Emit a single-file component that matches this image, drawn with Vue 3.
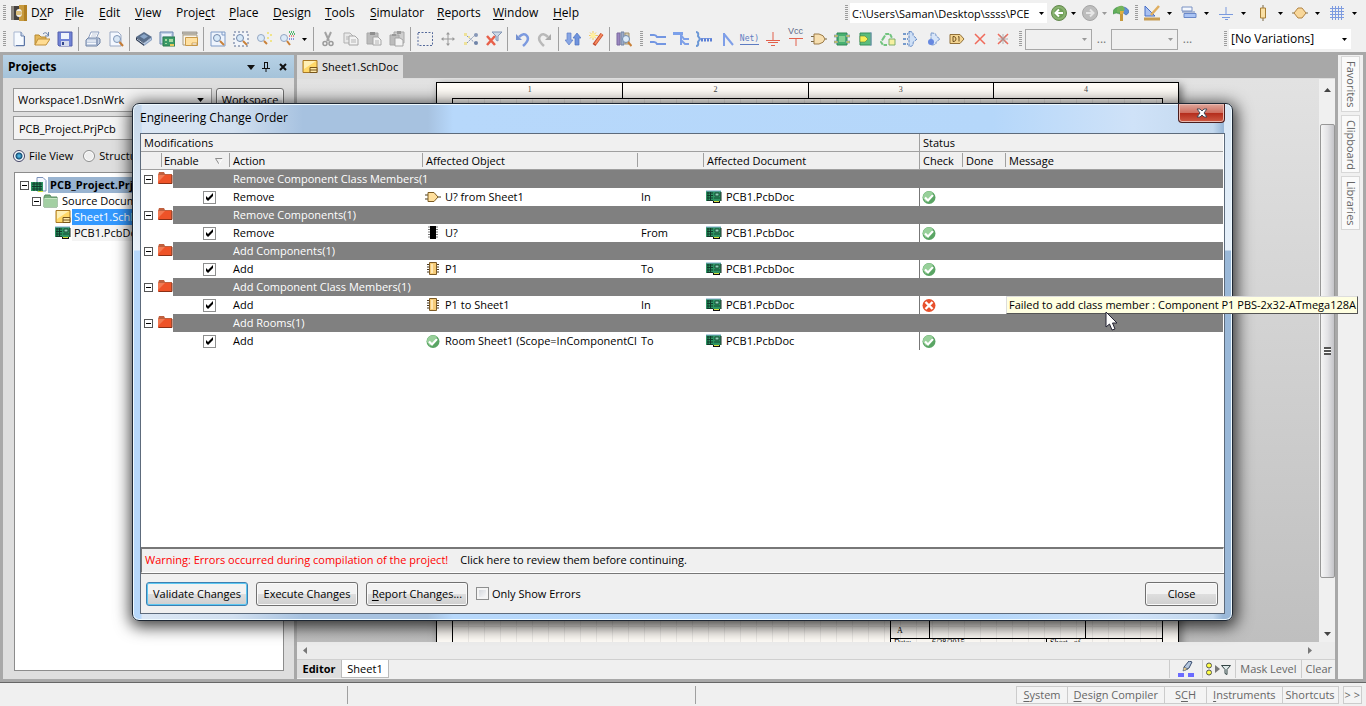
<script setup>
import { ref } from 'vue'

const art = {
  dxp: '<path d="M0 1h8v3q-3 0-3 4t3 4v3H0z" fill="#45413e"/><path d="M0 1h3v14H0z" fill="#8b867f"/><path d="M8 0h8v16H8v-4q3 0 3-4T8 4z" fill="#c79a3e"/><path d="M13 0h3v16h-3z" fill="#b07f22"/><path d="M5 6h4a2 2 0 0 1 0 4H5z" fill="#dcbf7c"/>',
  file: '<path d="M3 1h7l3 4v10H3z" fill="#f6faff" stroke="#a9b8d2"/><path d="M10 1v4h3" fill="#c7d6ec" stroke="#6f84ac"/><path d="M13.500 5v9.500H5" fill="none" stroke="#5c76a6"/>',
  open: '<path d="M1 14V4h4l2 2h5v2" fill="#e3b75a" stroke="#b88a30"/><path d="M4 8h12l-4 6H1z" fill="#ffdc92" stroke="#c0903a"/><path d="M9 3q3-3 5 1M14.500 1v4H11" fill="none" stroke="#6a82a8"/>',
  save: '<path d="M1 1h14v14H2l-1-1z" fill="#7183d6" stroke="#5560ac"/><path d="M4 2h8v6H4z" fill="#f0f4fb"/><path d="M4 10h8v5H4z" fill="#d5dbec"/><path d="M5 11h2v3H5z" fill="#33468e"/>',
  print: '<path d="M6 1h8l-3 7H3z" fill="#fff" stroke="#8d9fc0"/><path d="M1 9l2-2h11l1 1v4l-3 3H1z" fill="#c3cfe2" stroke="#6f83a6"/><path d="M2 10h9M2 12.500h9" stroke="#f6f9fe"/><path d="M12 8v6" stroke="#62779c"/><path d="M7 3h5M6 5h5" stroke="#a5b3cc" stroke-width=".7"/>',
  preview: '<path d="M2 1h8l3 3v11H2z" fill="#f4f8ff" stroke="#9aa9c4"/><circle cx="9" cy="8" r="3.500" fill="#d8e6f5" stroke="#8197b8"/><path d="M11.500 11l3.500 4" stroke="#c47c36" stroke-width="2"/>',
  cube: '<path d="M0 6l8-5 8 5-8 6z" fill="#5a6f8c"/><path d="M0 6l8 6v3L0 9z" fill="#2d3b52"/><path d="M16 6l-8 6v3l8-6z" fill="#8ca3c4"/><path d="M4 5.500l4-2.500 4 2.500L8 8z" fill="#8aa6c8"/><path d="M1 8l7 5 7-5" fill="none" stroke="#c2d2e6"/>',
  pcb: '<path d="M1 1h13v12H1z" fill="#c3d3e8" stroke="#6a86b0"/><path d="M3 3h9v2H3z" fill="#eef4fb"/><path d="M4 6h12v9H4z" fill="#3a9a68" stroke="#2a7a4c"/><path d="M6 8h2v2H6zM10 8h4v3h-4zM6 12h2v1H6z" fill="#a7dba2"/><path d="M11 13h4v2h-4z" fill="#e6c85a"/>',
  sheets: '<path d="M0 1h15v2H0z" fill="#c9c5bd" stroke="#8e897f" stroke-width=".8"/><path d="M1 4h14v10H1z" fill="#f8f4ea" stroke="#a79c84"/><path d="M3.500 6.500h12v8h-12z" fill="#ffe0a0" stroke="#c99a4a"/><path d="M10 12h5v2h-5z" fill="#fff" stroke="#bd8a35" stroke-width=".7"/>',
  zoomDoc: '<path d="M1 1h14v14H1z" fill="#eef4fd" stroke="#7f9bc7"/><path d="M12 1v3h3" fill="none" stroke="#7f9bc7"/><circle cx="7" cy="7" r="3.500" fill="#d6e8f8" stroke="#7288aa"/><path d="M10 10l4 4" stroke="#c98038" stroke-width="2"/>',
  zoomArea: '<path d="M1 1h14v14H1z" fill="#f2f5fa" stroke="#5a6d92" stroke-dasharray="2 2"/><circle cx="7" cy="7" r="3.500" fill="#d6e8f8" stroke="#7288aa"/><path d="M10 10l4 4" stroke="#c98038" stroke-width="2"/>',
  zoomSel: '<circle cx="5" cy="7" r="3.500" fill="#dbeaf8" stroke="#93a6c2"/><path d="M8 10l3 3" stroke="#c98038" stroke-width="2"/><path d="M11 1h2v2h-2zM14 3h2v2h-2zM11 6h2v2h-2zM14 9h2v2h-2z" fill="#f0e48a"/>',
  zoomFilt: '<circle cx="5" cy="7" r="3.500" fill="#dbeaf8" stroke="#93a6c2"/><path d="M8 10l3 4" stroke="#c98038" stroke-width="2"/><path d="M10 1h6" stroke="#53b870" stroke-width="2" stroke-dasharray="1 1"/><path d="M11 3h5" stroke="#53b870" stroke-width="2" stroke-dasharray="1 1"/><path d="M10 5h6" stroke="#e58787" stroke-width="2" stroke-dasharray="1 1"/><path d="M10 8h6" stroke="#8796e2" stroke-width="2" stroke-dasharray="1 1"/>',
  cut: '<path d="M5 1l4 9M11 1L7 10" stroke="#a3a3a3" stroke-width="2"/><circle cx="5" cy="12.500" r="2" fill="none" stroke="#9b9b9b" stroke-width="1.500"/><circle cx="11" cy="12.500" r="2" fill="none" stroke="#9b9b9b" stroke-width="1.500"/>',
  copy: '<path d="M1 2h6l3 3v7H1z" fill="#e9e9e9" stroke="#b1b1b1"/><path d="M6 5h6l3 3v6H6z" fill="#f2f2f2" stroke="#a5a5a5"/><path d="M8 9h5M8 11h5M3 6h3M3 8h3" stroke="#b5b5b5"/>',
  paste: '<path d="M1 2h11v11H1z" fill="#bcbcbc" stroke="#a8a8a8"/><path d="M4 1h5v3H4z" fill="#8f8f8f"/><path d="M7 6h5l3 3v5H7z" fill="#f3f3f3" stroke="#a5a5a5"/><path d="M9 10h4M9 12h4" stroke="#b5b5b5"/>',
  pasteAll: '<path d="M5 1h10v11H5z" fill="#cfcfcf" stroke="#a8a8a8"/><path d="M1 4h9v10H1z" fill="#bcbcbc" stroke="#a8a8a8"/><path d="M8 0h4v3H8zM3 3h4v2H3z" fill="#999"/><path d="M6 7h5l3 2v6H6z" fill="#f3f3f3" stroke="#a5a5a5"/>',
  select: '<path d="M1 1.500h14.500v13H1z" fill="none" stroke="#54699a" stroke-dasharray="2 1.500"/>',
  move: '<path d="M8 2v12M2 8h12" stroke="#999"/><path d="M8 1l2 2.500H6zM8 15l2-2.500H6zM1 8l2.500-2v4zM15 8l-2.500-2v4z" fill="#999"/>',
  desel: '<path d="M4 12l8-8M4 5l8 7" stroke="#8796b2" stroke-dasharray="2 1"/><path d="M1 2h3v3H1zM1 11h3v3H1zM5 5h2v2H5z" fill="#eee29a"/><circle cx="13" cy="4" r="2" fill="#8798b8"/><circle cx="13" cy="12" r="2" fill="#6f84a8"/>',
  clear: '<path d="M1 5l8 9M9 5l-8 9" stroke="#e8604a" stroke-width="2.500"/><path d="M6 1h10l-4 4v5l-2-1V5z" fill="#cbd7e6" stroke="#8296b4"/>',
  undo: '<path d="M2 3v6h6z" fill="#7390d0"/><path d="M5 6q5-5 8-1t-4 10" fill="none" stroke="#7c9adf" stroke-width="2.500"/>',
  redo: '<path d="M14 3v6H8z" fill="#aaa"/><path d="M11 6Q6 1 3 5t4 10" fill="none" stroke="#b9b9b9" stroke-width="2.500"/>',
  updown: '<path d="M2 2h4v7h2l-4 5-4-5h2z" fill="#88a6e4" stroke="#5f80c8" stroke-width=".7"/><path d="M10 14h4V7h2l-4-5-4 5h2z" fill="#6f93dd" stroke="#4f72bf" stroke-width=".7"/>',
  wand: '<path d="M14 3L6 14" stroke="#c0452a" stroke-width="3.500"/><path d="M14 3L7 13" stroke="#f58a5e" stroke-width="2"/><path d="M5 0v9M1 4.500h9M2 1.500l6 6M8 1.500l-6 6" stroke="#f4ca5a"/><circle cx="5" cy="4.500" r="2.500" fill="#fff0a0"/>',
  books: '<path d="M1 2h3v12H1z" fill="#9a88c0" stroke="#7a689f"/><path d="M5 1h3v13H5z" fill="#9dadc8" stroke="#7284a3"/><path d="M9 2h4v11H9z" fill="#d6ccb4" stroke="#a0936f"/><circle cx="10" cy="8" r="3.500" fill="#dcebf9" stroke="#718bad"/><path d="M12 11l3.500 4" stroke="#c98038" stroke-width="2"/>',
  wire: '<path d="M0 4h4q2 0 3 2h9M0 11h4q2 0 3 2h9" fill="none" stroke="#7396e2" stroke-width="2"/>',
  bus: '<path d="M0 2.500h10" stroke="#7ba0ea" stroke-width="3"/><path d="M8 2v12M8 4l3 4h5M8 9l4 4h4" fill="none" stroke="#7ea0e8" stroke-width="2"/>',
  harness: '<path d="M0 1q3 0 2 4l2 3-2 3q1 4-2 4" fill="none" stroke="#6c98d6" stroke-width="2"/><path d="M4 7.500h12" stroke="#7f9ce0"/><path d="M5 9h11" stroke="#5c80d6" stroke-width="3" stroke-dasharray="2 1"/>',
  entry: '<path d="M5 2v13M5 3l9 11" stroke="#7f9fe8" stroke-width="2" fill="none"/>',
  gnd: '<path d="M8 1v8M1 9.500h14M3 11.500h10M6 14.500h4" stroke="#e2604c"/>',
  vcc: '<path d="M1 7.500h14M8 7v8" stroke="#e2604c"/>',
  gate: '<path d="M0 5.500h4M0 10.500h4M12 8h4" stroke="#776644"/><path d="M3 3h5q5 1 6 5-1 4-6 5H3z" fill="#f7dfb0" stroke="#9b7b48"/>',
  sheetSym: '<path d="M3 2h10v12H3z" fill="#48b070" stroke="#2d8753"/><path d="M5 5h6v6H5z" fill="#86cf93"/><path d="M0 4h4v2H0zM0 10h4v2H0zM12 4h4v2h-4zM12 10h4v2h-4z" fill="#dfd34d" stroke="#6787ba" stroke-width=".6"/>',
  sheetEnt: '<path d="M3 2h11v12H3z" fill="#5bbd7d" stroke="#35905a"/><path d="M3 5h5l3 3-3 3H3z" fill="#f6ef55" stroke="#567f3a" stroke-width=".6"/><path d="M14 1v14" stroke="#7f98c4"/>',
  recycle: '<path d="M3 8l3-5h4l2 4M4 6l-3 5 2 3h4" fill="none" stroke="#72c47f" stroke-width="2" stroke-dasharray="4 1"/><path d="M9 8h6v6H9z" fill="#f5f0a0" stroke="#7fae6b"/>',
  harnCon: '<path d="M0 3h5M0 8h5M0 13h5" stroke="#4f7fc0" stroke-width="1.500" stroke-dasharray="3 1"/><path d="M6 .5q5 0 4 4l4 3.500-4 3.500q1 4-4 4z" fill="#cfe0f6" stroke="#5b83c2" stroke-dasharray="3 1"/>',
  harnEnt: '<path d="M5 2q6 0 5 3l4 3-4 3q1 3-5 3z" fill="#d7e5f8" stroke="#6f92c8" stroke-dasharray="3 1"/><circle cx="5" cy="11" r="3" fill="#6688e0"/>',
  port: '<path d="M1 3.500h10l4 4.500-4 4.500H1z" fill="#f4d591" stroke="#92713a"/><path d="M4 5.500v5h1q2-.5 2-2.500t-2-2.500zM9 6l1-.5v5" fill="none" stroke="#6d4f20"/>',
  noErc: '<path d="M3 3l10 10M13 3L3 13" stroke="#f06a5a" stroke-width="1.500"/>',
  noErc2: '<path d="M3 3l10 10M13 3L3 13" stroke="#f06a5a" stroke-width="1.500"/><path d="M3 8h10M8 3v10M5 4l6 8M11 4l-6 8" stroke="#999" stroke-width=".7"/>',
  back: '<circle cx="8" cy="8" r="7.500" fill="#86b06a" stroke="#63884f"/><circle cx="8" cy="8" r="5.500" fill="#6f9f58" stroke="#8fb878"/><path d="M12 8H5M8 4.500L4.500 8 8 11.500" fill="none" stroke="#fff" stroke-width="2"/>',
  fwd: '<circle cx="8" cy="8" r="7.500" fill="#bdbdbd" stroke="#a5a5a5"/><path d="M4 8h7M8 4.500L11.500 8 8 11.500" fill="none" stroke="#e6e6e6" stroke-width="2"/>',
  signs: '<path d="M7 7h3v9H7z" fill="#c79a3e"/><path d="M0 7q1-5 7-5v7q-4-2-7 0z" fill="#5fae5a" stroke="#3f8848" stroke-width=".6"/><path d="M9 2q6 0 7 5-1 2-3 3L9 7z" fill="#5f90d6" stroke="#3760a0" stroke-width=".6"/><path d="M4 4q1-4 6-3l2 3-3 4-5-1z" fill="#74b45c"/><path d="M7 6h4l-1 3H7z" fill="#e0b040"/>',
  draw: '<path d="M1 1v10h10z" fill="#a9c1f2" stroke="#4870c8"/><path d="M15 1L7 10" stroke="#dfae60" stroke-width="2.500"/><path d="M0 12.500h16v3H0z" fill="#c79d54"/>',
  align: '<path d="M1 2h10v4H1z" fill="#f5f8fd" stroke="#7b92c4"/><path d="M3 8.500h12v4H3z" fill="#a9c3f4" stroke="#6a88c8"/><path d="M1 7h13" stroke="#6a84bc"/>',
  gndBlue: '<path d="M8 2v7M1 9.500h14M4 12.500h8M7 14.500h3" stroke="#7a9ade"/>',
  resistor: '<path d="M8 0v16" stroke="#776644"/><path d="M5.500 3h5v10h-5z" fill="#f9dfa4" stroke="#a87f36"/>',
  diamond: '<path d="M0 8h16" stroke="#83744c"/><path d="M6 3h4l4 5-4 5H6L2 8z" fill="#f8d79a" stroke="#b28443"/>',
  grid: '<path d="M3.500 1v14M6.500 1v14M9.500 1v14M12.500 1v14M1 3.500h14M1 6.500h14M1 9.500h14M1 12.500h14" stroke="#7d9be0"/>',
  sch: '<path d="M1 1.500h14v12H1z" fill="#ffd868" stroke="#a87826"/><path d="M2 2h12L2 10z" fill="#fff0b5"/><path d="M8 8.500h7v5H8z" fill="#ffe9a8" stroke="#77551a"/><path d="M8 11h7" stroke="#77551a"/>',
  folderG: '<path d="M1 4l1-2h5l1 2h6v10H1z" fill="#79ad7e" stroke="#5a8c61"/><path d="M1 5h13v9H1z" fill="#a3cfa3"/><path d="M2 5.500h12" stroke="#c7e7c4"/>',
  folderR: '<path d="M0 4l1-3h5l1 2h7v10H0z" fill="#c0603e"/><path d="M0 4h13v8H0z" fill="#ee5328"/><path d="M0 4h7l-7 7z" fill="#f27a52"/><path d="M1 12.500h13V4" fill="none" stroke="#8c2f15"/>',
  board: '<path d="M0 2h15v10H0z" fill="#2c9462"/><path d="M0 2h15" stroke="#7aa6c8"/><path d="M1 4h6M1 6.500h6M1 9h6M1 11.500h6M2 3v9M4.500 3v9" stroke="#10392a"/><path d="M9 4h4v3H9z" fill="#8fd0b8" stroke="#174c37"/><path d="M8 9h6" stroke="#154a33"/><path d="M15 3v9" stroke="#1c2b25"/><path d="M7 13h7" stroke="#111" stroke-width="2"/><path d="M8 12.500h5" stroke="#d6e03c"/>',
  project: '<path d="M6 .5h6l3 3V14H6z" fill="#f4f8ff" stroke="#7c92ba"/><path d="M0 5h12v9H0z" fill="#2c9462"/><path d="M1 7h10M1 9.500h10M1 12h10M3 5v9M6 5v9M9 5v9" stroke="#10392a"/><path d="M7 14.500h5" stroke="#d6e03c"/>',
  and: '<path d="M0 6h4M0 10h4M12 8h4" stroke="#4b3c1e"/><path d="M3 3.500h6l4 4.500-4 4.500H3z" fill="#ffdf9c" stroke="#7d5c22"/>',
  chipB: '<path d="M3 2h3M3 4.500h3M3 7h3M3 9.500h3M3 12h3M10 2h3M10 4.500h3M10 7h3M10 9.500h3M10 12h3" stroke="#777"/><path d="M5 1h6v13H5z" fill="#000"/>',
  chipY: '<path d="M2 3.500h3M2 6h3M2 8.500h3M2 11h3M11 3.500h3M11 6h3M11 8.500h3M11 11h3" stroke="#493820"/><path d="M4.500 1.500h7v12h-7z" fill="#f6cc78" stroke="#7d5b26"/><path d="M6 3h2v9H6z" fill="#ffe7b2"/>',
  ok: '<circle cx="8" cy="8.500" r="6.500" fill="#5aa564"/><path d="M2 9a6 6 0 0 1 10-5L5 13z" fill="#98d09a"/><path d="M4 8.500l3 3L12 6" fill="none" stroke="#fff" stroke-width="2.200"/>',
  bad: '<circle cx="8" cy="8.500" r="6.500" fill="#e8502c"/><path d="M4.500 5l7 7M11.500 5l-7 7" stroke="#fff" stroke-width="2.400"/>',
  pen: '<path d="M6 6l5-6 3 1-3 6-4 2z" fill="#b4c6dd" stroke="#374b6e"/><path d="M6 6l4 2-5 2z" fill="#f3d58b" stroke="#374b6e" stroke-width=".6"/><path d="M0 12h6v4H0zM10 12h6v4h-6z" fill="#6b6bff"/>',
}

const menus = [['D', 'X', 'P'], ['', 'F', 'ile'], ['', 'E', 'dit'], ['', 'V', 'iew'], ['Proje', 'c', 't'], ['', 'P', 'lace'], ['', 'D', 'esign'], ['', 'T', 'ools'], ['', 'S', 'imulator'], ['', 'R', 'eports'], ['', 'W', 'indow'], ['', 'H', 'elp']]
const quick = ['draw', 'align', 'gndBlue', 'resistor', 'diamond', 'grid']
const groups = [
  ['file', 'open', 'save'], ['print', 'preview'], ['cube', 'pcb', 'sheets'],
  ['zoomDoc', 'zoomArea', 'zoomSel', 'zoomFilt', 'caret'],
  ['cut', 'copy', 'paste', 'pasteAll'], ['select', 'move', 'desel', 'clear'],
  ['undo', 'redo'], ['updown', 'wand'], ['books'],
]
const wiring = ['wire', 'bus', 'harness', 'entry', 'net', 'gnd', 'vcc', 'gate', 'sheetSym', 'sheetEnt', 'recycle', 'harnCon', 'harnEnt', 'port', 'noErc', 'noErc2']

const changes = ref([
  { title: 'Remove Component Class Members(1', on: true, action: 'Remove', icon: 'and', object: 'U? from Sheet1', dir: 'In', check: 'ok' },
  { title: 'Remove Components(1)', on: true, action: 'Remove', icon: 'chipB', object: 'U?', dir: 'From', check: 'ok' },
  { title: 'Add Components(1)', on: true, action: 'Add', icon: 'chipY', object: 'P1', dir: 'To', check: 'ok' },
  { title: 'Add Component Class Members(1)', on: true, action: 'Add', icon: 'chipY', object: 'P1 to Sheet1', dir: 'In', check: 'bad', tip: 'Failed to add class member : Component P1 PBS-2x32-ATmega128A' },
  { title: 'Add Rooms(1)', on: true, action: 'Add', icon: 'ok', object: 'Room Sheet1 (Scope=InComponentCl', dir: 'To', check: 'ok' },
])
const view = ref('file')
const onlyErrors = ref(false)
const path = ref('C:\\Users\\Saman\\Desktop\\ssss\\PCE')
const project = ref('PCB_Project.PrjPcb')
</script>

<template>
  <div class="app">
    <header class="bars">
      <div class="bar">
        <i class="grip first"></i>
        <svg class="ico logo" viewBox="0 0 16 16" v-html="art.dxp"></svg>
        <nav class="menu">
          <button v-for="m in menus" :key="m.join('')" type="button">{{ m[0] }}<u>{{ m[1] }}</u>{{ m[2] }}</button>
        </nav>
        <div class="right-tools">
          <i class="grip"></i>
          <div class="combo path"><input v-model="path" aria-label="Path"><svg class="caret" viewBox="0 0 5 3"><path d="M0 0h5L2.500 3z" /></svg></div>
          <button class="tool" type="button" aria-label="Back"><svg class="ico" viewBox="0 0 16 16" v-html="art.back"></svg></button>
          <svg class="caret slim" viewBox="0 0 5 3"><path d="M0 0h5L2.500 3z" /></svg>
          <button class="tool" type="button" aria-label="Forward"><svg class="ico" viewBox="0 0 16 16" v-html="art.fwd"></svg></button>
          <svg class="caret slim dim" viewBox="0 0 5 3"><path d="M0 0h5L2.500 3z" /></svg>
          <button class="tool" type="button" aria-label="Navigate"><svg class="ico" viewBox="0 0 16 16" v-html="art.signs"></svg></button>
          <i class="grip"></i>
          <template v-for="q in quick" :key="q">
            <button class="tool" type="button" :aria-label="q"><svg class="ico" viewBox="0 0 16 16" v-html="art[q]"></svg></button>
            <svg class="caret spaced" viewBox="0 0 5 3"><path d="M0 0h5L2.500 3z" /></svg>
          </template>
        </div>
      </div>
      <div class="bar">
        <i class="grip first"></i>
        <div v-for="(g, i) in groups" :key="i" class="group">
          <template v-for="t in g" :key="t">
            <svg v-if="t === 'caret'" class="caret wide" viewBox="0 0 5 3"><path d="M0 0h5L2.500 3z" /></svg>
            <button v-else class="tool" type="button" :aria-label="t"><svg class="ico" viewBox="0 0 16 16" v-html="art[t]"></svg></button>
          </template>
        </div>
        <i class="grip roomy"></i>
        <button v-for="w in wiring" :key="w" class="tool" type="button" :aria-label="w">
          <span v-if="w === 'net'" class="net">Net)</span>
          <template v-else>
            <span v-if="w === 'vcc'" class="vcc">Vcc</span>
            <svg class="ico" viewBox="0 0 16 16" v-html="art[w]"></svg>
          </template>
        </button>
        <i class="grip roomy"></i>
        <div class="combo off"><select aria-label="Filter" disabled></select><svg class="caret dim" viewBox="0 0 5 3"><path d="M0 0h5L2.500 3z" /></svg></div>
        <span class="dots">...</span>
        <div class="combo off"><select aria-label="Mask" disabled></select><svg class="caret dim" viewBox="0 0 5 3"><path d="M0 0h5L2.500 3z" /></svg></div>
        <span class="dots">...</span>
        <div class="right-tools variants">
          <i class="grip"></i>
          <div class="combo var"><select aria-label="Variations"><option>[No Variations]</option></select><svg class="caret" viewBox="0 0 5 3"><path d="M0 0h5L2.500 3z" /></svg></div>
        </div>
      </div>
    </header>

    <main class="work">
      <aside class="projects">
        <div class="panel-head">
          <h2>Projects</h2>
          <svg viewBox="0 0 40 10"><path d="M0 3h8L4 8z" fill="#111" /><path d="M17.500 0v6M20.500 0v6M17 .5h4M15 6.500h8M19 6v4" stroke="#111" fill="none" /><path d="M33 2l6 6M39 2l-6 6" stroke="#111" stroke-width="2" /></svg>
        </div>
        <div class="panel-body">
          <div class="prow">
            <div class="combo box"><select aria-label="Workspace file"><option>Workspace1.DsnWrk</option></select><svg class="caret" viewBox="0 0 5 3"><path d="M0 0h5L2.500 3z" /></svg></div>
            <button class="btn ws" type="button">Workspace</button>
          </div>
          <div class="prow"><input v-model="project" class="field" aria-label="Project file"></div>
          <div class="prow radios">
            <label><input v-model="view" type="radio" value="file">File View</label>
            <label><input v-model="view" type="radio" value="structure">Structure Editor</label>
          </div>
          <ul class="tree">
            <li class="lv0"><i class="minus"></i><svg class="ico" viewBox="0 0 16 16" v-html="art.project"></svg><span class="proj">PCB_Project.PrjPcb</span></li>
            <li class="lv1"><i class="minus"></i><svg class="ico" viewBox="0 0 16 16" v-html="art.folderG"></svg><span>Source Documents</span></li>
            <li class="lv2"><svg class="ico" viewBox="0 0 16 16" v-html="art.sch"></svg><span class="sel">Sheet1.SchDoc</span></li>
            <li class="lv2"><svg class="ico" viewBox="0 0 16 16" v-html="art.board"></svg><span class="hot">PCB1.PcbDoc</span></li>
          </ul>
        </div>
      </aside>

      <section class="editor">
        <div class="doc-tabs"><button type="button"><svg class="ico" viewBox="0 0 16 16" v-html="art.sch"></svg>Sheet1.SchDoc</button></div>
        <div class="stage">
          <div class="canvas">
            <div class="paper">
              <div class="zones"><span>1</span><span>2</span><span>3</span><span>4</span></div>
              <div class="inner">
                <div class="title-block">
                  <div class="tb-row top"><span>A</span><span></span><span></span></div>
                  <div class="tb-row"><span>Date:</span><span>6/28/2015</span><span>Sheet &nbsp; of</span></div>
                </div>
              </div>
            </div>
          </div>
          <div class="vbar">
            <svg viewBox="0 0 7 4"><path d="M0 4h7L3.500 0z" /></svg>
            <div class="thumb"><i></i></div>
            <svg viewBox="0 0 7 4"><path d="M0 0h7L3.500 4z" /></svg>
          </div>
        </div>
        <div class="hbar">
          <svg viewBox="0 0 4 7"><path d="M4 0v7L0 3.500z" /></svg>
          <svg viewBox="0 0 4 7"><path d="M0 0v7l4-3.500z" /></svg>
        </div>
        <div class="foot-tabs">
          <b>Editor</b><button class="on" type="button">Sheet1</button>
          <div class="masks">
            <button type="button" aria-label="Highlight"><svg class="ico" viewBox="0 0 16 16" v-html="art.pen"></svg></button>
            <button type="button" aria-label="Filter"><svg class="filt" viewBox="0 0 28 16"><circle cx="4" cy="4.500" r="2.500" fill="#ff4" stroke="#555" /><circle cx="4" cy="11.500" r="2.500" fill="#ff4" stroke="#555" /><path d="M10 4v8l5-4z" fill="#777" /><path d="M16.500 4.500h9l-3.500 4v5l-2-1v-4z" fill="#dfe9e9" stroke="#344" /></svg></button>
            <button type="button">Mask Level</button><button type="button">Clear</button>
          </div>
        </div>
      </section>

      <nav class="side-tabs"><button type="button">Favorites</button><button type="button">Clipboard</button><button type="button">Libraries</button></nav>
    </main>

    <footer class="status">
      <div></div><div></div>
      <div class="panels">
        <button type="button"><u>S</u>ystem</button><button type="button"><u>D</u>esign Compiler</button><button class="sch" type="button">S<u>C</u>H</button><button type="button"><u>I</u>nstruments</button><button class="tight" type="button">Shortcuts</button>
        <button class="more" type="button">&gt; &gt;</button>
      </div>
    </footer>

    <div class="dialog" role="dialog" aria-labelledby="eco-title">
      <div class="title">
        <h1 id="eco-title">Engineering Change Order</h1>
        <button class="x" type="button" aria-label="Close window"><svg viewBox="0 0 12 10"><path d="M1 1h3l2 2 2-2h3L8 5l3 4H8L6 7 4 9H1l3-4z" fill="#fff" stroke="#444a58" /></svg></button>
      </div>
      <div class="client">
        <div class="grid-area">
          <table>
            <colgroup><col class="c-tree"><col class="c-en"><col class="c-act"><col class="c-obj"><col class="c-dir"><col class="c-doc"><col class="c-chk"><col class="c-chk"><col></colgroup>
            <thead>
              <tr class="bands"><th colspan="6">Modifications</th><th colspan="3">Status</th></tr>
              <tr class="cols"><th></th><th class="enable">Enable<svg viewBox="0 0 8 7"><path d="M7.500.5h-7L4 6" fill="none" stroke="#8c8c8c" /><path d="M7.500.5L4 6" stroke="#fff" /></svg></th><th>Action</th><th>Affected Object</th><th></th><th>Affected Document</th><th class="full">Check</th><th>Done</th><th>Message</th></tr>
            </thead>
            <tbody v-for="c in changes" :key="c.title">
              <tr class="grp"><td colspan="2" class="node"><div><i class="minus"></i><svg class="ico" viewBox="0 0 16 16" v-html="art.folderR"></svg></div></td><td class="name">{{ c.title }}</td><td colspan="6"></td></tr>
              <tr>
                <td></td>
                <td class="en"><label><input v-model="c.on" type="checkbox" :aria-label="'Enable ' + c.object"><svg v-if="c.on" viewBox="0 0 13 13"><path d="M3 5v3l2 2 5-5V2L5 7z" /></svg></label></td>
                <td>{{ c.action }}</td>
                <td><div class="with-ico"><svg class="ico" viewBox="0 0 16 16" v-html="art[c.icon]"></svg>{{ c.object }}</div></td>
                <td>{{ c.dir }}</td>
                <td><div class="with-ico"><svg class="ico" viewBox="0 0 16 16" v-html="art.board"></svg>PCB1.PcbDoc</div></td>
                <td class="chk"><svg class="ico" viewBox="0 0 16 16" v-html="art[c.check]"></svg></td>
                <td></td>
                <td class="msg"><div v-if="c.tip" class="tip">{{ c.tip }}<svg class="cursor" viewBox="0 0 13 20"><path d="M1 1v15l3.500-3 2.500 6 3-1-2.500-6H12z" fill="#fff" stroke="#223" /></svg></div></td>
              </tr>
            </tbody>
          </table>
        </div>
        <div class="warn"><span>Warning: Errors occurred during compilation of the project!</span><a href="#">Click here to review them before continuing.</a></div>
        <div class="actions">
          <button class="btn def" type="button">Validate Changes</button>
          <button class="btn" type="button">Execute Changes</button>
          <button class="btn" type="button"><u>R</u>eport Changes...</button>
          <label><input v-model="onlyErrors" type="checkbox">Only Show Errors</label>
          <button class="btn close" type="button">Close</button>
        </div>
      </div>
    </div>
  </div>
</template>

<style>
body { margin: 0; overflow: hidden; }
</style>

<style scoped>
* { box-sizing: border-box; }
.app { position: relative; display: flex; flex-direction: column; height: 100vh; background: #a8a8a8; font: 11px/16px "Open Sans", "Noto Sans", sans-serif; color: #000; }
button, input, select { font: inherit; color: inherit; }
button { padding: 0; border: 0; background: none; white-space: nowrap; }
u { text-underline-offset: 2px; }
h1, h2, ul { margin: 0; padding: 0; font-size: inherit; list-style: none; }
.ico { width: 16px; height: 16px; flex: none; display: block; }

.bars { flex: none; background: #f0f0f0; }
.bar { display: flex; align-items: center; height: 26px; white-space: nowrap; }
.bar > * { flex: none; }
.grip { width: 3px; height: 16px; margin: 0 2px 0 3px; background: repeating-linear-gradient(#9d9d9d 0 1px, transparent 1px 2px); }
.grip.first { margin-right: 1px; }
.grip.roomy { margin: 0 3px 0 5px; }
.logo { margin-left: 4px; }
.menu { display: grid; grid-template-columns: 34px 34px 36px 41px 53px 44px 52px 45px 67px 56px 60px auto; margin-left: 4px; font-size: 12px; }
.menu button { text-align: left; }
.right-tools { display: flex; align-items: center; margin-left: auto; padding-right: 4px; }
.tool { display: flex; align-items: center; justify-content: center; width: 23px; height: 24px; position: relative; }
.group { display: flex; align-items: center; }
.group + .group { border-left: 1px solid #a0a0a0; padding-left: 2px; margin-left: 2px; }
.caret { width: 5px; height: 3px; fill: #000; flex: none; }
.caret.dim { fill: #999; }
.caret.slim { margin: 0 2px 0 1px; }
.caret.spaced { margin: 0 5px 0 4px; }
.caret.wide { margin: 0 4px; }
.net { color: #5d7cc2; font: 8px/10px "DejaVu Sans Mono", monospace; border-bottom: 1px solid #5d7cc2; }
.vcc { position: absolute; top: 0; left: 4px; color: #5c6a88; font: 9px/9px "Liberation Sans", sans-serif; }
.combo { display: flex; align-items: center; height: 20px; background: #fff; padding-right: 4px; font-size: 12px; }
.combo input, .combo select { appearance: none; flex: 1; min-width: 0; width: 10px; height: 100%; border: 0; padding: 0 2px; background: none; outline: 0; }
.combo.path { width: 197px; padding-right: 3px; font-size: 11px; }
.combo.off { width: 67px; height: 21px; border: 1px solid #a8a8a8; background: #f0f0f0; }
.combo.var { width: 122px; }
.variants { padding-right: 15px; }
.dots { width: 19px; text-align: center; font-size: 12px; color: #777; }

.work { display: flex; flex: 1; min-height: 0; padding: 3px 3px 3px; }
.projects { display: flex; flex-direction: column; width: 291px; background: #dedede; }
.panel-head { display: flex; align-items: center; justify-content: space-between; height: 23px; padding: 0 7px 0 5px; background: linear-gradient(#b7d1e5, #a5c3da); }
.panel-head h2 { font-size: 12px; font-weight: 700; }
.panel-head svg { width: 40px; height: 10px; }
.panel-body { display: flex; flex-direction: column; flex: 1; padding: 10px 10px 8px; }
.prow { display: flex; gap: 4px; height: 28px; align-items: flex-start; }
.box { width: 200px; height: 24px; padding-right: 7px; border: 1px solid #999; background: #f3f3f3; font-size: 11px; }
.box select { padding: 0 4px; }
.box .caret { width: 7px; height: 4px; }
.field { width: 200px; height: 24px; padding: 0 5px; border: 1px solid #999; background: #f3f3f3; }
.ws { width: 68px; }
.prow.radios { gap: 10px; align-items: center; height: 24px; }
.radios label { display: flex; align-items: center; gap: 4px; }
.radios input { appearance: none; width: 12px; height: 12px; margin: 0; border: 1px solid #8e8f8f; border-radius: 50%; background: #eee; box-shadow: inset 0 0 0 1px #fff; }
.radios input:checked { border-color: #446; background: radial-gradient(circle, #4fb0dc 0 1px, #134c74 3px, #e6eef4 4px); }
.tree { flex: 1; margin: 4px 0 0 1px; padding-top: 4px; border: 1px solid #8c8c8c; background: #fff; white-space: nowrap; overflow: hidden; }
.tree li { display: flex; height: 16px; align-items: center; }
.tree .ico { margin: 0 1px 0 2px; }
.tree span { height: 16px; padding: 0 2px; flex: 1; }
.lv0 { padding-left: 5px; }
.lv1 { padding-left: 17px; }
.lv2 { padding-left: 38px; }
.tree .proj { background: #99b4d1; font-weight: 700; }
.tree .sel { background: #39f; color: #fff; }
.tree .hot { background: #f4f4f4; }
.minus { width: 9px; height: 9px; flex: none; border: 1px solid #555; background: linear-gradient(#000, #000) center / 5px 1px no-repeat #fff; }

.editor { display: flex; flex-direction: column; flex: 1; min-width: 0; margin-left: 3px; }
.doc-tabs { height: 24px; border-bottom: 1px solid #dedede; }
.doc-tabs button { display: flex; align-items: center; gap: 4px; height: 24px; padding: 0 5px; background: #dedede; }
.stage { display: flex; flex: 1; min-height: 0; }
.canvas { flex: 1; overflow: hidden; padding: 3px 140px 0 139px; background: linear-gradient(#e2e2e2, #bfbfbf); }
.paper { height: 600px; padding: 0 15px; border: 1px solid #000; background: #fffcf7; box-shadow: 3px 3px 8px #777; }
.zones { display: grid; grid-template-columns: repeat(4, 1fr); height: 15px; margin: 0 -15px; color: #444; }
.zones span { text-align: center; font: 8px/14px "Liberation Serif", serif; }
.zones span + span { border-left: 1px solid #000; }
.inner { display: flex; flex-direction: column; height: 560px; border: 1px solid #000; background: repeating-linear-gradient(90deg, transparent 0 15px, #eeebe7 15px 16px), repeating-linear-gradient(transparent 0 15px, #eeebe7 15px 16px); }
.title-block { width: 273px; margin: 480px -1px 0 auto; border: 1px solid #000; font: 8px/10px "Liberation Serif", serif; }
.tb-row { display: grid; grid-template-columns: 38px 117px 1fr; height: 20px; overflow: hidden; }
.tb-row.top { grid-template-columns: 39px 156px 1fr; height: 59px; border-bottom: 1px solid #000; }
.tb-row.top span { padding: 46px 0 0 6px; }
.tb-row.top span:not(:last-child) { border-right: 1px solid #000; }
.tb-row span { padding-left: 3px; }
.tb-row:not(.top) span { line-height: 8px; }
.tb-row:not(.top) span:last-child { border-left: 1px solid #000; }
.vbar { display: flex; flex-direction: column; align-items: center; width: 16px; padding: 9px 0 6px; background: #f0f0f0; }
.vbar svg { width: 7px; height: 4px; fill: #444; flex: none; }
.thumb { display: flex; align-items: center; justify-content: center; width: 15px; flex: 1; margin: 32px 0 54px; border: 1px solid #979797; border-radius: 2px; background: linear-gradient(90deg, #f5f5f5, #e3e3e6 50%, #c4c4c8); }
.thumb i { width: 7px; height: 8px; background: repeating-linear-gradient(#555 0 2px, #fff 2px 3px); }
.hbar { display: flex; align-items: center; justify-content: space-between; height: 17px; padding: 0 23px 0 6px; background: #ececec; }
.hbar svg { width: 4px; height: 7px; fill: #777; }
.foot-tabs { display: flex; height: 20px; border-top: 1px solid #d0d0d0; background: #f0f0f0; padding-bottom: 1px; line-height: 18px; }
.foot-tabs b { width: 44px; text-align: center; background: #dedede; }
.foot-tabs .on { width: 48px; background: #fff; border: 1px solid #bbb; border-top: 0; }
.masks { display: flex; margin-left: auto; color: #666; }
.masks button { padding: 0 4px; border-left: 1px solid #ccc; }
.masks button:first-child { padding: 0 8px; }
.masks button:nth-child(2) { padding: 0 2px; }
.masks button:last-child { padding-right: 3px; }
.filt { width: 28px; height: 16px; display: block; }
.side-tabs { display: flex; flex-direction: column; gap: 3px; width: 25px; margin-left: 3px; padding: 1px 3px 0; background: #f0f0f0; }
.side-tabs button { writing-mode: vertical-rl; padding: 4px 0 3px; width: 19px; border: 1px solid #d8d8d8; background: #fafafa; color: #666; }

.status { display: flex; align-items: center; flex: none; height: 24px; border-top: 1px solid #666; background: #f0f0f0; }
.status > div:not(.panels) { flex: 0 0 348px; height: 18px; border-right: 1px solid #a0a0a0; }
.panels { display: flex; margin-left: auto; padding-right: 4px; color: #666; }
.panels button { height: 18px; padding: 0 6px; border: 1px solid #ccc; margin-left: -1px; background: #f4f4f4; }
.panels .sch { padding: 0 10px; }
.panels .tight { padding: 0 3px; }
.panels .more { margin-left: 4px; padding: 0 1px; }

.btn { height: 24px; border: 1px solid #707070; border-radius: 3px; background: linear-gradient(#f2f2f2 0 49%, #dedede 51%, #cfcfcf); box-shadow: inset 0 0 0 1px #fafafa; }
.dialog { position: absolute; left: 132px; right: 133px; top: 103px; bottom: 85px; display: flex; flex-direction: column; padding: 0 7px 6px; border: 1px solid #1e2733; border-radius: 7px; background: linear-gradient(#d7e6f5, #e6f0fa 146px, transparent 147px) right / 8px 100% no-repeat, linear-gradient(#c6d7e9, #e8f0f8 146px, transparent 147px) left / 8px 100% no-repeat, linear-gradient(90deg, #b7d8fb 0 8px, #dbe7f4 9px, #d2e0f0 100px, #a7c2e0 170px, #a7c2e0 295px, #b7d8fb 320px, #b5d7fa 860px, #cfe2f8 1000px, #c3d8ee 1080px, #9ab8d8 1090px); box-shadow: inset 0 0 0 1px #effaff, 1px 3px 16px 3px rgba(0, 0, 0, .75); }
.title { display: flex; align-items: flex-start; justify-content: space-between; height: 29px; }
.title h1 { padding: 6px 0 0; font-size: 12px; font-weight: 400; }
.x { display: flex; align-items: center; justify-content: center; width: 47px; height: 19px; border: 1px solid #4a1d1d; border-top: 0; border-radius: 0 0 4px 4px; background: linear-gradient(#dfa79b 0, #cf6f60 48%, #b32b1a 50%, #cf5b45); box-shadow: inset 0 0 0 1px #e9b9b0; }
.x svg { width: 12px; height: 10px; }
.client { display: flex; flex-direction: column; flex: 1; min-height: 0; border: 1px solid #5d6b7c; background: #f0f0f0; }
.grid-area { flex: 1; background: #fff; padding-right: 1px; }
table { width: 100%; table-layout: fixed; border-spacing: 0; }
.c-tree { width: 20px; }
.c-en { width: 68px; }
.c-act { width: 193px; }
.c-obj { width: 215px; }
.c-dir { width: 66px; }
.c-doc { width: 216px; }
.c-chk { width: 43px; }
th, td { height: 18px; padding: 0 0 0 4px; text-align: left; font-weight: 400; white-space: nowrap; overflow: hidden; line-height: 16px; }
th { background: #f0f0f0; border-bottom: 1px solid #a0a0a0; }
.bands th + th, .cols .full { border-left: 1px solid #a0a0a0; padding-left: 3px; }
.bands th:first-child, .cols .enable { padding-left: 3px; }
.cols th + th:not(.full) { background: linear-gradient(#a0a0a0, #a0a0a0) 0 1px / 1px 14px no-repeat #f0f0f0; }
.cols svg { width: 8px; height: 7px; margin-left: 16px; }
.grp td { background: #808080; color: #fff; }
.grp .node { padding-left: 3px; background: linear-gradient(90deg, #fff 32px, #808080 32px); }
.grp .name { position: relative; overflow: visible; }
.node div { display: flex; align-items: center; gap: 5px; }
.en label { display: grid; width: 13px; height: 13px; margin-left: 38px; }
.en input, .en svg { grid-area: 1 / 1; margin: 0; }
.en svg { z-index: 1; pointer-events: none; }
input[type="checkbox"] { appearance: none; width: 13px; height: 13px; border: 1px solid #8e8f8f; background: #fff; }
.with-ico { display: flex; align-items: center; gap: 4px; margin-left: -1px; }
.chk { border-left: 1px solid #777; padding-left: 1px; }
td.msg { overflow: visible; padding: 0; }
.tip { position: relative; z-index: 3; width: max-content; height: 18px; margin-left: 1px; padding: 0 1px 0 2px; border: 1px solid #555; border-top-color: #ddd; border-left-color: #ddd; background: #ffffe1; }
.cursor { position: absolute; left: 98px; top: 14px; width: 13px; height: 20px; }
.warn { display: flex; gap: 12px; height: 26px; align-items: center; padding: 0 0 2px 3px; border: 1px solid #fff; border-top: 2px solid #777; border-left: 1px solid #777; }
.warn span { color: #f00; }
.warn a { color: #000; text-decoration: none; }
.actions { display: flex; gap: 8px; height: 40px; padding: 8px 6px 8px 5px; border-top: 1px solid #777; }
.actions .btn { width: 102px; }
.actions .def { border-color: #3c7fb1; box-shadow: inset 0 0 0 1px #5cc8f2; }
.actions label { display: flex; align-items: center; gap: 3px; }
.actions label input { margin: 0; background: linear-gradient(135deg, #cbcfd5, #fff); box-shadow: inset 0 0 0 2px #f4f4f4; }
.actions .close { width: 73px; margin-left: auto; }
</style>
